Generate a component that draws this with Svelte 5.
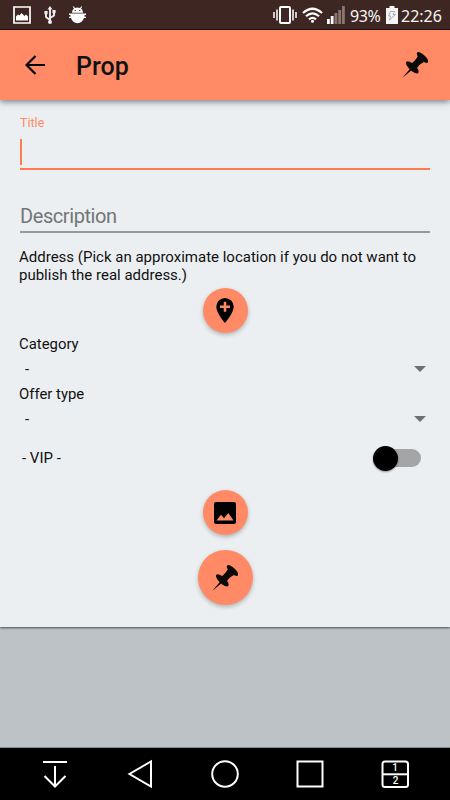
<script>
  let title = '';
  let vip = false;

  const spinners = [
    { label: 'Category', value: '-' },
    { label: 'Offer type', value: '-' }
  ];

  const signalBars = [5, 8, 11, 14, 18];
</script>

<style>
  :global(body) {
    background-color: #000;
  }

  .screen {
    display: flex;
    flex-direction: column;
    width: 450px;
    height: 800px;
    overflow: hidden;
    background-color: #bdc2c6;
    color: #111;
    font-family: Roboto, "Liberation Sans", sans-serif;
  }

  svg {
    display: block;
  }

  .status-bar {
    box-sizing: border-box;
    display: flex;
    justify-content: space-between;
    flex: none;
    height: 30px;
    padding: 0 9px 0 13px;
    background-color: #3e2723;
    border-bottom: 1px solid #1b0d0a;
    color: #f4f4f4;
    font-family: "Noto Sans", sans-serif;
    font-size: 16px;
  }

  .status-left,
  .status-right {
    display: flex;
    align-items: center;
    white-space: nowrap;
  }

  .usb {
    margin-left: 13px;
  }

  .bug {
    margin-left: 13px;
  }

  .wifi {
    margin-left: 5px;
  }

  .signal {
    margin: 0 5px 0 4px;
  }

  .percent,
  .clock {
    padding-top: 2px;
  }

  .percent {
    width: 31px;
    letter-spacing: -0.4px;
  }

  .battery {
    margin: 0 3px 0 5px;
  }

  .clock {
    width: 41px;
    margin-right: -1px;
  }

  .app-bar {
    box-sizing: border-box;
    display: flex;
    align-items: center;
    flex: none;
    height: 70px;
    padding: 0 22px 0 25px;
    background-color: #ff8a65;
    box-shadow: 0 2px 6px rgba(40, 60, 70, 0.6);
    z-index: 1;
  }

  .app-bar h1 {
    flex: 1;
    margin: 3px 0 0 31px;
    font-size: 25px;
    font-weight: 500;
    line-height: 30px;
  }

  button {
    display: flex;
    align-items: center;
    justify-content: center;
    padding: 0;
    border: 0;
    background: none;
    color: #000;
  }

  .form {
    box-sizing: border-box;
    flex: none;
    height: 527px;
    padding: 15px 20px 0;
    background-color: #eceff1;
    box-shadow: 0 1px 2px rgba(0, 0, 0, 0.6);
  }

  .title-label {
    color: #ff8a65;
    font-size: 12.5px;
    line-height: 16px;
  }

  .title-input {
    display: flex;
    height: 36px;
    padding-bottom: 1px;
    border-bottom: 2px solid #ff7a4d;
  }

  .cursor {
    width: 2px;
    height: 26px;
    margin-top: 8px;
    background-color: #ff7a4d;
  }

  .description {
    box-sizing: border-box;
    height: 62px;
    margin-top: 1px;
    padding-top: 33px;
    border-bottom: 2px solid #969899;
    color: #737577;
    font-size: 20px;
    letter-spacing: -0.42px;
    line-height: 24px;
  }

  .address {
    margin: 15px -5px 4px -1px;
    font-size: 15px;
    line-height: 18px;
  }

  .fab {
    width: 45px;
    height: 45px;
    margin: 0 auto;
    border-radius: 50%;
    background-color: #ff8a65;
    box-shadow: 0 2px 4px rgba(0, 0, 0, 0.25);
  }

  .fab-large {
    width: 55px;
    height: 55px;
    margin-top: 15px;
  }

  .spinners {
    padding-top: 2px;
  }

  .spinner-label {
    margin-left: -1px;
    font-size: 14.9px;
    line-height: 18px;
  }

  .spinner {
    display: flex;
    align-items: center;
    justify-content: space-between;
    height: 32px;
    padding: 0 4px 0 5px;
    font-size: 15px;
  }

  .vip {
    display: flex;
    align-items: center;
    justify-content: space-between;
    height: 30px;
    margin: 8px 9px 17px 2px;
    font-size: 15px;
  }

  .switch {
    display: flex;
    align-items: center;
    width: 48px;
    height: 26px;
  }

  .track {
    width: 38px;
    height: 18px;
    margin-left: 10px;
    border-radius: 9px;
    background-color: #a3a5a6;
  }

  .thumb {
    flex: none;
    width: 25px;
    height: 25px;
    margin-right: -25px;
    border-radius: 50%;
    background-color: #000;
    box-shadow: 0 1px 2px rgba(0, 0, 0, 0.4);
    z-index: 1;
  }

  .thumb.on {
    order: 1;
    margin: 0 0 0 -25px;
  }

  .nav-bar {
    box-sizing: border-box;
    display: flex;
    align-items: center;
    justify-content: space-between;
    height: 53px;
    margin-top: auto;
    padding: 0 40px;
    border-top: 1px solid #85898c;
    background-color: #000;
  }

  .nav-bar svg {
    fill: none;
    stroke: #fff;
    stroke-width: 2;
  }

  .nav-bar text {
    fill: #fff;
    stroke: none;
    font-size: 10px;
    font-weight: 500;
    text-anchor: middle;
  }
</style>

{#snippet pin(size)}
  <svg width={size} height={size} viewBox="0 0 26 26" fill="#0c0907">
    <path d="M.2 26 8 16.800l1.500 1.400z" />
    <ellipse cx="10.300" cy="15.300" rx="8.200" ry="3.200" transform="rotate(43 10.300 15.300)" />
    <ellipse cx="20.500" cy="5.500" rx="7.300" ry="2.900" transform="rotate(43 20.500 5.500)" />
    <path d="M9.500 11.500Q12.500 9.500 16 4l6 6q-5.500 2.500-7.500 7z" />
  </svg>
{/snippet}

<div class="screen">
  <div class="status-bar">
    <div class="status-left">
      <svg width="18" height="18" viewBox="0 0 18 18">
        <path d="M1 1h16v16H1z" fill="none" stroke="#fff" stroke-width="1.700" />
        <path d="M3 14.500v-4l2-2 1.500 1L8.500 7l3 3L13 8.500l2 2v4z" fill="#fff" />
      </svg>
      <svg class="usb" width="12" height="18" viewBox="0 0 12 18" fill="none" stroke="#eee" stroke-width="1.900">
        <path d="M6 2v14M6 14 2 11V6M6 12l4-2.500V5" />
        <path d="M6 0 3.500 3.500h5zM.4 5h3.200v3.200H.4zM8.400 4h3.200v3.200H8.400z" fill="#eee" stroke="none" />
        <circle cx="6" cy="16" r="2" fill="#eee" stroke="none" />
      </svg>
      <svg class="bug" width="17" height="18" viewBox="0 0 17 18" fill="#fff">
        <path d="M3 6.800C3 5 3.900 3.400 5 2.500L3.800.7 4.600.2 6 2a6 6 0 0 1 5 0L12.400.2l.8.5L12 2.500c1.100.9 2 2.500 2 4.300z" />
        <path d="M0 7.500h17V9h-1.500v1.700H17v1.400h-2C14 15 11.500 17.300 8.500 17.300S3 15 2 12.100H0v-1.400h1.500V9H0z" />
        <circle cx="6.200" cy="4.400" r=".7" fill="#3e2723" />
        <circle cx="10.800" cy="4.400" r=".7" fill="#3e2723" />
      </svg>
    </div>
    <div class="status-right">
      <svg width="24" height="18" viewBox="0 0 24 18" fill="none" stroke="#fff" stroke-width="1.500">
        <rect x="7" y="1" width="10" height="16" rx="1" stroke-width="2" />
        <path d="M4 3.500v11M20 3.500v11M1 6v6M23 6v6" />
      </svg>
      <svg class="wifi" width="21" height="16" viewBox="0 0 21 16" fill="none" stroke="#fff" stroke-width="2.200">
        <path d="M1 6Q10.500-2.500 20 6M4 9.300q6.500-5.800 13 0M7 12.400q3.500-3 7 0" />
        <circle cx="10.500" cy="14.300" r="1.500" fill="#fff" stroke="none" />
      </svg>
      <svg class="signal" width="18" height="18" viewBox="0 0 18 18">
        {#each signalBars as height, i}
          <rect x={i * 3.75} y={18 - height} width="2.800" {height} fill={i < 2 ? '#fff' : '#8b7672'} />
        {/each}
      </svg>
      <span class="percent">93%</span>
      <svg class="battery" width="12" height="18" viewBox="0 0 12 18">
        <path d="M3.500 0h5v2H12v16H0V2h3.500z" fill="#f4f4f4" />
        <path d="M4.500 5.500h4.300L7 8.500h2.500L3.500 14l1-4H2.700z" fill="none" stroke="#999" stroke-width=".8" />
      </svg>
      <span class="clock">22:26</span>
    </div>
  </div>

  <div class="app-bar">
    <button aria-label="Back">
      <svg width="20" height="20" viewBox="0 0 20 20" fill="none" stroke="#000" stroke-width="2.200">
        <path d="M20 10H2M10.500 1 1.500 10l9 9" />
      </svg>
    </button>
    <h1>Prop</h1>
    <button aria-label="Pin">{@render pin(26)}</button>
  </div>

  <div class="form">
    <div class="title-label">Title</div>
    <div class="title-input">{title}<span class="cursor"></span></div>
    <div class="description">Description</div>

    <div class="address">Address (Pick an approximate location if you do not want to publish the real address.)</div>
    <button class="fab" aria-label="Add location">
      <svg width="18" height="25" viewBox="0 0 18 25">
        <path d="M9 0a8.700 8.700 0 0 0-8.700 8.700C.3 15 9 25 9 25s8.700-10 8.700-16.300A8.700 8.700 0 0 0 9 0z" />
        <path d="M9 3.800v10M4 8.800h10" stroke="#ff8a65" stroke-width="2.500" />
      </svg>
    </button>

    <div class="spinners">
      {#each spinners as spinner}
        <div class="spinner-label">{spinner.label}</div>
        <div class="spinner">
          <span>{spinner.value}</span>
          <svg width="12" height="6" viewBox="0 0 12 6" fill="#6d6f70">
            <path d="M0 0h12L6 6z" />
          </svg>
        </div>
      {/each}
    </div>

    <div class="vip">
      <span>- VIP -</span>
      <div class="switch">
        <span class="thumb" class:on={vip}></span>
        <span class="track"></span>
      </div>
    </div>

    <button class="fab" aria-label="Add image">
      <svg width="22" height="22" viewBox="0 0 22 22">
        <rect width="22" height="22" rx="2" />
        <path d="M2.500 18.500 7 12.700l3 3.600 4.300-5.300 5.200 7.500z" fill="#ff8a65" />
      </svg>
    </button>
    <button class="fab fab-large" aria-label="Publish">{@render pin(26)}</button>
  </div>

  <div class="nav-bar">
    <svg width="30" height="30" viewBox="0 0 30 30">
      <path d="M3 3h24M15 7v20M4.500 17 15 27.500 25.500 17" />
    </svg>
    <svg width="30" height="30" viewBox="0 0 30 30">
      <path d="M26 2.500v25L4.500 15z" />
    </svg>
    <svg width="30" height="30" viewBox="0 0 30 30">
      <circle cx="15" cy="15" r="12.800" />
    </svg>
    <svg width="30" height="30" viewBox="0 0 30 30">
      <path d="M2.500 2.500h25v25h-25z" />
    </svg>
    <svg width="30" height="30" viewBox="0 0 30 30">
      <rect x="2.500" y="2.500" width="25.500" height="25.500" rx="2.500" />
      <path d="M2.500 15.300H28" />
      <text x="15" y="12.300">1</text>
      <text x="15.500" y="25">2</text>
    </svg>
  </div>
</div>
